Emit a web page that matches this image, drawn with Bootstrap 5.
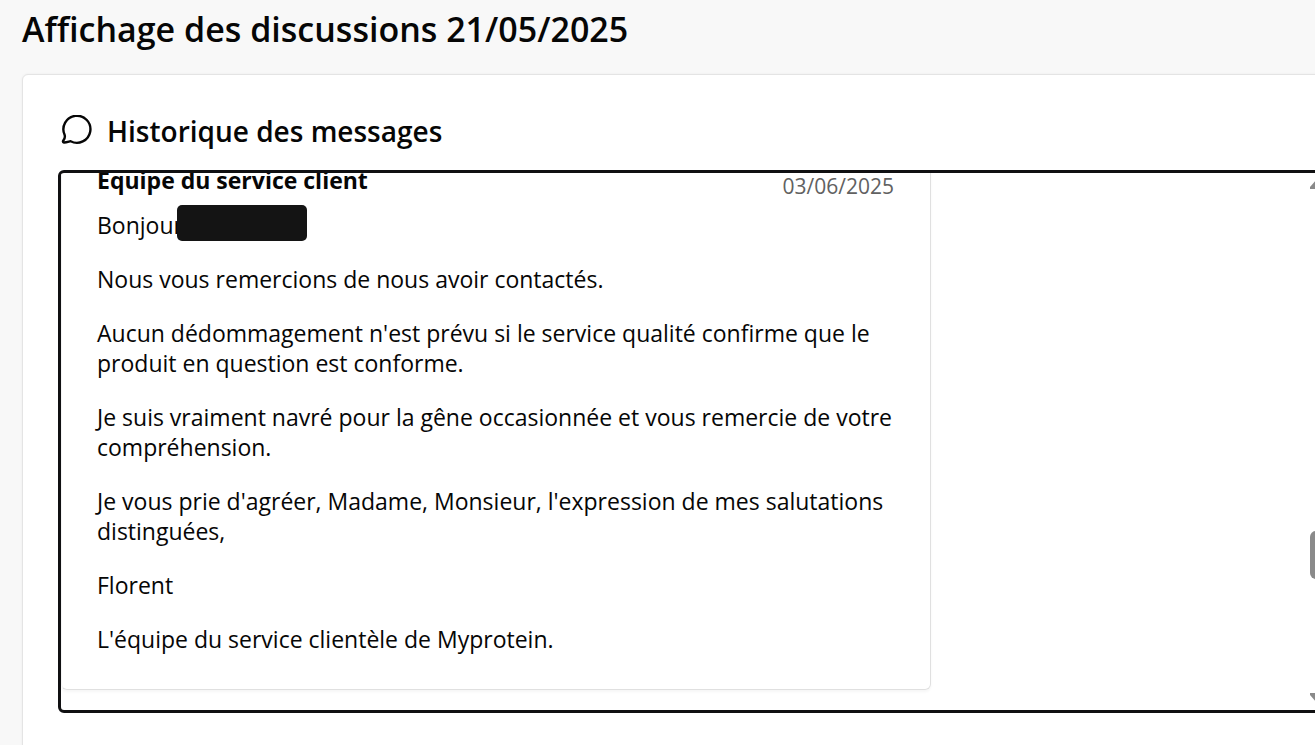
<!DOCTYPE html>
<html lang="fr">
<head>
<meta charset="utf-8">
<meta name="viewport" content="width=device-width, initial-scale=1">
<title>Affichage des discussions</title>
<link href="https://cdn.jsdelivr.net/npm/bootstrap@5.3.0/dist/css/bootstrap.min.css" rel="stylesheet">
<style>
  body { background: #f8f8f8; color: #060606; font-family: "Open Sans", "Noto Sans", sans-serif; font-size: 23px; line-height: 30px; overflow: hidden; }
  .page { padding: 8px 0 0 22px; margin-right: -60px; }
  .page-title { font-size: 34px; line-height: 42px; font-weight: 600; margin-bottom: 24px; }
  .panel { background: #fff; border: 1px solid #e4e4e4; border-radius: 6px; box-shadow: 0 0 3px #0000000d; padding: 36px 35px 60px; }
  .panel-title { font-size: 28px; line-height: 40px; font-weight: 600; gap: 14px; padding-left: 3px; margin-bottom: 19px; }
  .log { height: 543px; border: 3px solid #101012; border-radius: 6px; }
  .messages { padding-bottom: 20px; }
  .message { width: 870px; border: 1px solid #e0e0e0; border-left-color: #f4f4f4; border-radius: 6px; box-shadow: 0 2px 3px #0000000a; padding: 34px 36px 35px 35px; }
  .message p { margin-bottom: 24px; }
  .message header { margin-bottom: 15px; }
  .author { font-weight: 700; }
  .date { color: #616161; font-size: 21px; line-height: 30px; padding-top: 6px; margin-bottom: -6px; }
  .redacted { display: inline-block; width: 130px; height: 36px; margin: -10px 0 -7px -6px; vertical-align: baseline; background: #141414; border-radius: 5px; }
  .scroller { width: 26px; padding: 7px 0 8px; }
  .thumb { width: 16px; height: 48px; background: #8a8a8a; border-radius: 6px; margin-top: 342px; }
</style>
</head>
<body>
<main class="page">
  <h1 class="page-title">Affichage des discussions 21/05/2025</h1>
  <section class="panel">
    <h2 class="panel-title d-flex align-items-center">
      <svg width="32" height="32" viewBox="0 1 32 32" fill="none" stroke="#060606" stroke-width="2.4" stroke-linejoin="round" aria-hidden="true"><path d="M3.6 20.8A13.5 13.5 0 1 1 9.6 27.2C7.5 27.7 4.8 28.7 2.9 28.5C1.6 28.3 1.8 27.2 2.5 26.2C3.8 24.4 4.3 22.8 3.6 20.8Z"/></svg>
      <span>Historique des messages</span>
    </h2>
    <div class="log d-flex overflow-hidden">
      <div class="messages flex-grow-1 d-flex flex-column justify-content-end">
        <article class="message">
          <header class="d-flex justify-content-between">
            <span class="author">Equipe du service client</span>
            <time class="date" datetime="2025-06-03">03/06/2025</time>
          </header>
          <p>Bonjour<span class="redacted"></span></p>
          <p>Nous vous remercions de nous avoir contactés.</p>
          <p>Aucun dédommagement n'est prévu si le service qualité confirme que le produit en question est conforme.</p>
          <p>Je suis vraiment navré pour la gêne occasionnée et vous remercie de votre compréhension.</p>
          <p>Je vous prie d'agréer, Madame, Monsieur, l'expression de mes salutations distinguées,</p>
          <p>Florent</p>
          <p class="mb-0">L'équipe du service clientèle de Myprotein.</p>
        </article>
      </div>
      <div class="scroller d-flex flex-column" aria-hidden="true">
        <svg width="16" height="9" viewBox="0 0 16 9"><path d="M0 9V7L6 0H10L16 7V9Z" fill="#8a8a8a"/></svg>
        <div class="thumb"></div>
        <svg class="mt-auto" width="16" height="9" viewBox="0 0 16 9"><path d="M0 0V2L6 9H10L16 2V0Z" fill="#8a8a8a"/></svg>
      </div>
    </div>
  </section>
</main>
<script src="https://cdn.jsdelivr.net/npm/bootstrap@5.3.0/dist/js/bootstrap.bundle.min.js"></script>
</body>
</html>
